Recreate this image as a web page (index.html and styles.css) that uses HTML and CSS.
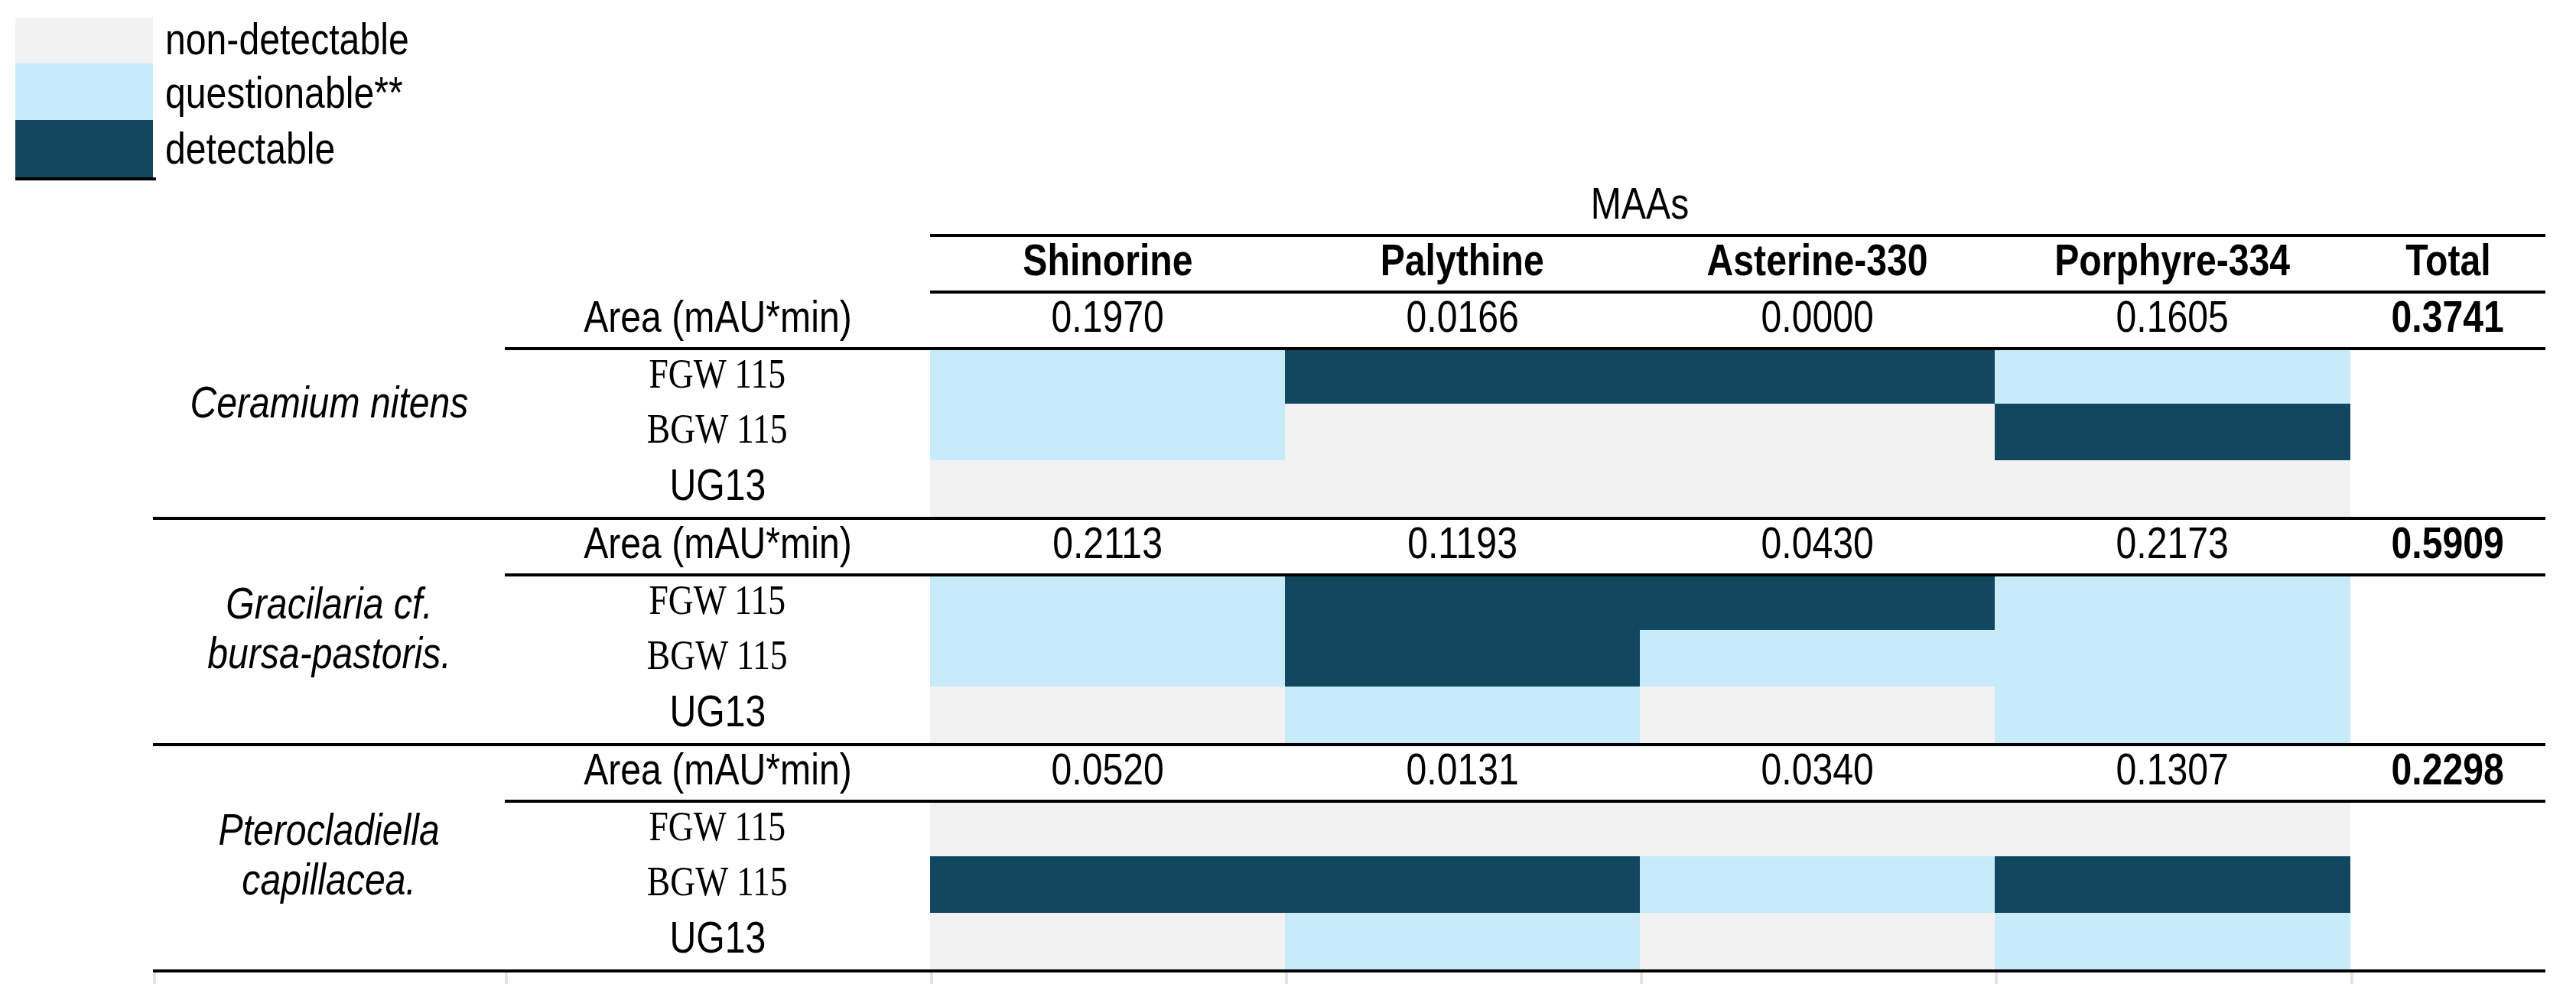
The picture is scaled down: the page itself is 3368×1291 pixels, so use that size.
FILE: index.html
```html
<!DOCTYPE html>
<html lang="en">
<head>
<meta charset="utf-8">
<title>MAAs detection table</title>
<link rel="stylesheet" href="styles.css">
</head>
<body>
<div class="legend">
  <div class="swatches">
    <div class="sw nd r1"></div>
    <div class="sw q r2"></div>
    <div class="sw d r3"></div>
  </div>
  <div class="labels">
    <div class="lbl r1"><span class="tx">non-detectable</span></div>
    <div class="lbl r2"><span class="tx">questionable**</span></div>
    <div class="lbl r3"><span class="tx">detectable</span></div>
  </div>
</div>

<div class="table">
  <div class="grid head">
    <div class="cell maas"><span class="tx">MAAs</span></div>
    <div class="cell hd c3"><span class="tx b">Shinorine</span></div>
    <div class="cell hd c4"><span class="tx b">Palythine</span></div>
    <div class="cell hd c5"><span class="tx b">Asterine-330</span></div>
    <div class="cell hd c6"><span class="tx b">Porphyre-334</span></div>
    <div class="cell hd c7"><span class="tx b">Total</span></div>
  </div>

  <div class="grid group">
    <div class="cell species"><span class="tx it">Ceramium nitens</span></div>
    <div class="cell area"><span class="tx">Area (mAU*min)</span></div>
    <div class="cell area"><span class="tx">0.1970</span></div>
    <div class="cell area"><span class="tx">0.0166</span></div>
    <div class="cell area"><span class="tx">0.0000</span></div>
    <div class="cell area"><span class="tx">0.1605</span></div>
    <div class="cell area"><span class="tx b">0.3741</span></div>
    <div class="cell filt"><span class="tx serif">FGW 115</span></div>
    <div class="q"></div><div class="d"></div><div class="d"></div><div class="q"></div><div></div>
    <div class="cell filt"><span class="tx serif">BGW 115</span></div>
    <div class="q"></div><div class="nd"></div><div class="nd"></div><div class="d"></div><div></div>
    <div class="cell filt"><span class="tx">UG13</span></div>
    <div class="nd"></div><div class="nd"></div><div class="nd"></div><div class="nd"></div><div></div>
  </div>

  <div class="grid group">
    <div class="cell species"><span class="tx it">Gracilaria cf.<br>bursa-pastoris.</span></div>
    <div class="cell area"><span class="tx">Area (mAU*min)</span></div>
    <div class="cell area"><span class="tx">0.2113</span></div>
    <div class="cell area"><span class="tx">0.1193</span></div>
    <div class="cell area"><span class="tx">0.0430</span></div>
    <div class="cell area"><span class="tx">0.2173</span></div>
    <div class="cell area"><span class="tx b">0.5909</span></div>
    <div class="cell filt"><span class="tx serif">FGW 115</span></div>
    <div class="q"></div><div class="d"></div><div class="d"></div><div class="q"></div><div></div>
    <div class="cell filt"><span class="tx serif">BGW 115</span></div>
    <div class="q"></div><div class="d"></div><div class="q"></div><div class="q"></div><div></div>
    <div class="cell filt"><span class="tx">UG13</span></div>
    <div class="nd"></div><div class="q"></div><div class="nd"></div><div class="q"></div><div></div>
  </div>

  <div class="grid group">
    <div class="cell species"><span class="tx it">Pterocladiella<br>capillacea.</span></div>
    <div class="cell area"><span class="tx">Area (mAU*min)</span></div>
    <div class="cell area"><span class="tx">0.0520</span></div>
    <div class="cell area"><span class="tx">0.0131</span></div>
    <div class="cell area"><span class="tx">0.0340</span></div>
    <div class="cell area"><span class="tx">0.1307</span></div>
    <div class="cell area"><span class="tx b">0.2298</span></div>
    <div class="cell filt"><span class="tx serif">FGW 115</span></div>
    <div class="nd"></div><div class="nd"></div><div class="nd"></div><div class="nd"></div><div></div>
    <div class="cell filt"><span class="tx serif">BGW 115</span></div>
    <div class="d"></div><div class="d"></div><div class="q"></div><div class="d"></div><div></div>
    <div class="cell filt"><span class="tx">UG13</span></div>
    <div class="nd"></div><div class="q"></div><div class="nd"></div><div class="q"></div><div></div>
  </div>

  <div class="grid stubs">
    <div></div><div></div><div></div><div></div><div></div><div></div><div></div>
  </div>
</div>
</body>
</html>
```

FILE: styles.css
```css
html, body {
  margin: 0;
  padding: 0;
  background: #ffffff;
}

body {
  font-family: "Liberation Sans", Arial, sans-serif;
  font-size: 57px;
  color: #000000;
  width: 3368px;
  height: 1291px;
  overflow: hidden;
}

.tx {
  display: inline-block;
  white-space: nowrap;
  line-height: 1.15;
  transform: scaleX(0.845);
}

.b { font-weight: bold; }
.it { font-style: italic; }
.serif {
  font-family: "Liberation Serif", "Times New Roman", serif;
  font-size: 54px;
}

/* colour states */
.nd { background: #f2f2f2; }
.q  { background: #c8ebfa; }
.d  { background: #11475f; }

/* legend */
.legend {
  display: flex;
  box-sizing: border-box;
  height: 236px;
  padding: 23px 0 0 20px;
}

.swatches {
  display: flex;
  flex-direction: column;
  width: 184px;
  height: 213px;
  box-sizing: border-box;
  border-bottom: 4px solid #000;
}

.sw { width: 180px; }
.r1 { height: 60px; }
.r2 { height: 74px; }
.r3 { height: 75px; }

.labels {
  display: flex;
  flex-direction: column;
  margin-left: 12px;
}

.lbl {
  display: flex;
  align-items: center;
}

.lbl.r1 { padding-bottom: 2px; box-sizing: border-box; }
.lbl.r2 { padding-top: 4px; box-sizing: border-box; }

.lbl .tx { transform-origin: left center; }

/* table */
.table {
  margin-left: 200px;
  width: 3128px;
}

.grid {
  display: grid;
  grid-template-columns: 460px 556px 464px 464px 464px 465px 255px;
}

.cell {
  display: flex;
  align-items: center;
  justify-content: center;
  box-sizing: border-box;
  padding-bottom: 8px;
  text-align: center;
}

.head {
  grid-template-rows: 74px 74px;
}

.maas {
  grid-column: 3 / 8;
  grid-row: 1;
  border-bottom: 4px solid #000;
  padding-right: 255px;
}

.hd {
  grid-row: 2;
  border-bottom: 4px solid #000;
}

.c3 { grid-column: 3; }
.c4 { grid-column: 4; }
.c5 { grid-column: 5; }
.c6 { grid-column: 6; }
.c7 { grid-column: 7; }

.group {
  grid-template-rows: 74px 70px 74px 74px;
  border-bottom: 4px solid #000;
}

.species {
  grid-column: 1;
  grid-row: 1 / 5;
}

.species .tx {
  line-height: 65px;
}

.area {
  border-bottom: 4px solid #000;
}

.stubs {
  height: 15px;
}

.stubs > div {
  border-left: 4px solid #e3e3e3;
}
```
